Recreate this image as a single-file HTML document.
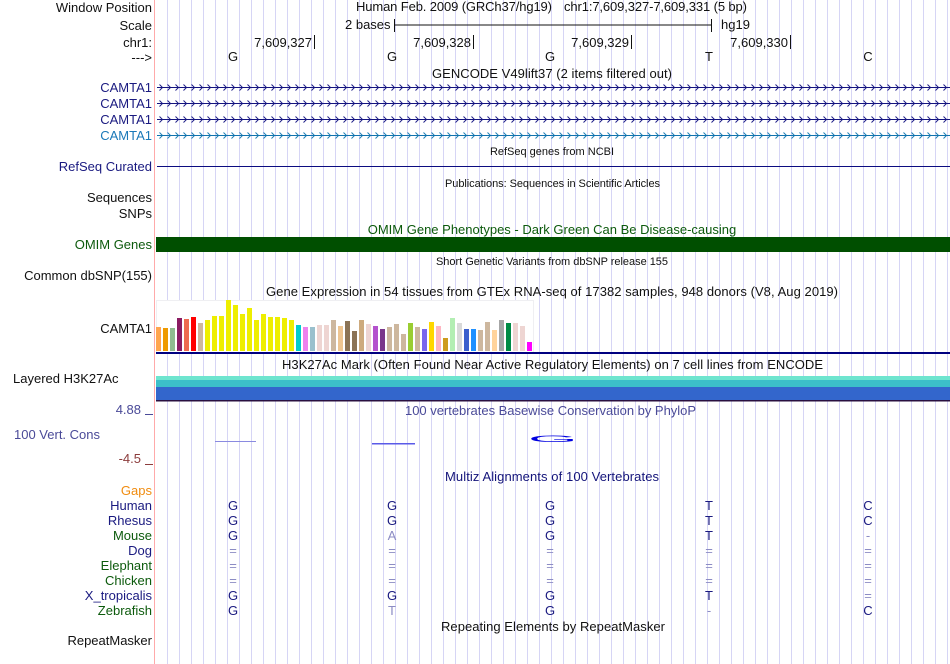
<!DOCTYPE html>
<html><head><meta charset="utf-8"><style>
html,body{margin:0;padding:0;background:#fff;width:950px;height:664px;overflow:hidden}
svg{display:block}
text{font-family:"Liberation Sans",sans-serif;font-size:13px;fill:#111}
.r{text-anchor:end}.c{text-anchor:middle}.s{font-size:11px}
.n{fill:#1a1a80}.g{fill:#0c5a0c}.l{fill:#8c8cc4}
</style></head><body>
<svg width="950" height="664" viewBox="0 0 950 664" xmlns="http://www.w3.org/2000/svg">
<defs>
<pattern id="grid" x="156" y="0" width="12" height="664" patternUnits="userSpaceOnUse"><rect x="11" y="0" width="1" height="664" fill="#d6d5f5"/></pattern>
<pattern id="ch" x="157" y="0" width="8" height="16" patternUnits="userSpaceOnUse"><path d="M2.5 4.5 L5.5 7.5 L2.5 10.5" fill="none" stroke="#1f1f88" stroke-width="1"/></pattern>
<pattern id="ch2" x="157" y="0" width="8" height="16" patternUnits="userSpaceOnUse"><path d="M2.5 4.5 L5.5 7.5 L2.5 10.5" fill="none" stroke="#1f7fb5" stroke-width="1"/></pattern>
</defs>
<rect width="950" height="664" fill="#fff"/>
<rect x="156" y="0" width="792" height="664" fill="url(#grid)"/>
<rect x="154" y="0" width="1" height="664" fill="#ffaaaa"/>

<text x="152" y="12" class="r">Window Position</text>
<text x="152" y="30" class="r">Scale</text>
<text x="152" y="47" class="r">chr1:</text>
<text x="152" y="62" class="r">---&gt;</text>
<text x="356" y="11" textLength="196" lengthAdjust="spacing">Human Feb. 2009 (GRCh37/hg19)</text>
<text x="564" y="11" textLength="183" lengthAdjust="spacing">chr1:7,609,327-7,609,331 (5 bp)</text>
<text x="345" y="29">2 bases</text>
<text x="721" y="29">hg19</text>
<path d="M394.5 19V32M711.5 19V32M394 25H712" stroke="#111" stroke-width="1" fill="none"/>
<text x="312" y="47" class="r">7,609,327</text>
<text x="471" y="47" class="r">7,609,328</text>
<text x="629" y="47" class="r">7,609,329</text>
<text x="788" y="47" class="r">7,609,330</text>
<path d="M314.5 35V49M473.5 35V49M631.5 35V49M790.5 35V49" stroke="#111" stroke-width="1"/>
<text x="233" y="61" class="c">G</text><text x="392" y="61" class="c">G</text><text x="550" y="61" class="c">G</text><text x="709" y="61" class="c">T</text><text x="868" y="61" class="c">C</text>
<text x="432" y="78" textLength="240" lengthAdjust="spacing">GENCODE V49lift37 (2 items filtered out)</text>

<text x="152" y="92" class="r n">CAMTA1</text>
<text x="152" y="108" class="r n">CAMTA1</text>
<text x="152" y="124" class="r n">CAMTA1</text>
<text x="152" y="140" class="r" style="fill:#1a78b8">CAMTA1</text>
<rect x="157" y="82" width="793" height="11" fill="url(#ch)"/>
<rect x="157" y="98" width="793" height="11" fill="url(#ch)"/>
<rect x="157" y="114" width="793" height="11" fill="url(#ch)"/>
<rect x="157" y="130" width="793" height="11" fill="url(#ch2)"/>
<rect x="157" y="87" width="793" height="1" fill="#13137f"/>
<rect x="157" y="103" width="793" height="1" fill="#13137f"/>
<rect x="157" y="119" width="793" height="1" fill="#13137f"/>
<rect x="157" y="135" width="793" height="1" fill="#1173ad"/>

<text x="552" y="155" class="c s">RefSeq genes from NCBI</text>
<text x="152" y="171" class="r n">RefSeq Curated</text>
<rect x="157" y="166" width="793" height="1" fill="#0c0c80"/>
<text x="445" y="187" class="s" textLength="215" lengthAdjust="spacing">Publications: Sequences in Scientific Articles</text>
<text x="152" y="202" class="r">Sequences</text>
<text x="152" y="218" class="r">SNPs</text>
<text x="552" y="234" class="c g">OMIM Gene Phenotypes - Dark Green Can Be Disease-causing</text>
<text x="152" y="249" class="r g">OMIM Genes</text>
<rect x="156" y="237" width="794" height="15" fill="#004f00"/>
<text x="436" y="265" class="s" textLength="232" lengthAdjust="spacing">Short Genetic Variants from dbSNP release 155</text>
<text x="152" y="280" class="r">Common dbSNP(155)</text>
<text x="266" y="296" textLength="572" lengthAdjust="spacing">Gene Expression in 54 tissues from GTEx RNA-seq of 17382 samples, 948 donors (V8, Aug 2019)</text>
<text x="152" y="333" class="r">CAMTA1</text>

<rect x="156.5" y="300.5" width="377" height="52" fill="#fff" stroke="#efeff2"/>
<g>
<rect x="156" y="327" width="5" height="24" fill="#FFA54F"/>
<rect x="163" y="328" width="5" height="23" fill="#EE9A00"/>
<rect x="170" y="328" width="5" height="23" fill="#8FBC8F"/>
<rect x="177" y="318" width="5" height="33" fill="#8B1C62"/>
<rect x="184" y="319" width="5" height="32" fill="#EE6A50"/>
<rect x="191" y="317" width="5" height="34" fill="#FF0000"/>
<rect x="198" y="323" width="5" height="28" fill="#CDB79E"/>
<rect x="205" y="320" width="5" height="31" fill="#EEEE00"/>
<rect x="212" y="316" width="5" height="35" fill="#EEEE00"/>
<rect x="219" y="316" width="5" height="35" fill="#EEEE00"/>
<rect x="226" y="300" width="5" height="51" fill="#EEEE00"/>
<rect x="233" y="305" width="5" height="46" fill="#EEEE00"/>
<rect x="240" y="314" width="5" height="37" fill="#EEEE00"/>
<rect x="247" y="308" width="5" height="43" fill="#EEEE00"/>
<rect x="254" y="320" width="5" height="31" fill="#EEEE00"/>
<rect x="261" y="314" width="5" height="37" fill="#EEEE00"/>
<rect x="268" y="317" width="5" height="34" fill="#EEEE00"/>
<rect x="275" y="317" width="5" height="34" fill="#EEEE00"/>
<rect x="282" y="318" width="5" height="33" fill="#EEEE00"/>
<rect x="289" y="320" width="5" height="31" fill="#EEEE00"/>
<rect x="296" y="325" width="5" height="26" fill="#00CDCD"/>
<rect x="303" y="327" width="5" height="24" fill="#EE82EE"/>
<rect x="310" y="327" width="5" height="24" fill="#9AC0CD"/>
<rect x="317" y="325" width="5" height="26" fill="#EED5D2"/>
<rect x="324" y="325" width="5" height="26" fill="#EED5D2"/>
<rect x="331" y="320" width="5" height="31" fill="#CDB79E"/>
<rect x="338" y="326" width="5" height="25" fill="#EEC591"/>
<rect x="345" y="321" width="5" height="30" fill="#8B7355"/>
<rect x="352" y="331" width="5" height="20" fill="#8B7355"/>
<rect x="359" y="320" width="5" height="31" fill="#CDAA7D"/>
<rect x="366" y="324" width="5" height="27" fill="#EED5D2"/>
<rect x="373" y="326" width="5" height="25" fill="#B452CD"/>
<rect x="380" y="329" width="5" height="22" fill="#7A378B"/>
<rect x="387" y="327" width="5" height="24" fill="#CDB79E"/>
<rect x="394" y="324" width="5" height="27" fill="#CDB79E"/>
<rect x="401" y="334" width="5" height="17" fill="#CDB79E"/>
<rect x="408" y="323" width="5" height="28" fill="#9ACD32"/>
<rect x="415" y="327" width="5" height="24" fill="#CDB79E"/>
<rect x="422" y="329" width="5" height="22" fill="#7A67EE"/>
<rect x="429" y="322" width="5" height="29" fill="#FFD700"/>
<rect x="436" y="326" width="5" height="25" fill="#FFB6C1"/>
<rect x="443" y="338" width="5" height="13" fill="#CD9B1D"/>
<rect x="450" y="318" width="5" height="33" fill="#B3EEB3"/>
<rect x="457" y="323" width="5" height="28" fill="#D9D9D9"/>
<rect x="464" y="329" width="5" height="22" fill="#3A5FCD"/>
<rect x="471" y="329" width="5" height="22" fill="#1E90FF"/>
<rect x="478" y="330" width="5" height="21" fill="#CDB79E"/>
<rect x="485" y="322" width="5" height="29" fill="#CDB79E"/>
<rect x="492" y="330" width="5" height="21" fill="#FFD39B"/>
<rect x="499" y="320" width="5" height="31" fill="#A6A6A6"/>
<rect x="506" y="323" width="5" height="28" fill="#008B45"/>
<rect x="513" y="323" width="5" height="28" fill="#EED5D2"/>
<rect x="520" y="326" width="5" height="25" fill="#EED5D2"/>
<rect x="527" y="342" width="5" height="9" fill="#FF00FF"/>
</g>
<rect x="156" y="352" width="794" height="2" fill="#000080"/>

<text x="282" y="369" textLength="541" lengthAdjust="spacing">H3K27Ac Mark (Often Found Near Active Regulatory Elements) on 7 cell lines from ENCODE</text>
<text x="13" y="383">Layered H3K27Ac</text>
<rect x="156" y="376" width="794" height="4" fill="#6ee5cf"/>
<rect x="156" y="380" width="794" height="7" fill="#3cbfc9"/>
<rect x="156" y="387" width="794" height="13" fill="#3366cc"/>
<rect x="156" y="400" width="794" height="1.5" fill="#2a1040"/>

<text x="141" y="414" class="r" style="fill:#4a4a98">4.88</text>
<rect x="145" y="414" width="8" height="1" fill="#4a4a98"/>
<text x="14" y="439" style="fill:#4a4a98">100 Vert. Cons</text>
<text x="141" y="463" class="r" style="fill:#8c3c3c">-4.5</text>
<rect x="145" y="464" width="8" height="1" fill="#8c3c3c"/>
<text x="405" y="415" textLength="291" lengthAdjust="spacing" style="fill:#4a4a98">100 vertebrates Basewise Conservation by PhyloP</text>
<rect x="215" y="441" width="41" height="1" fill="#8a8ae0"/>
<rect x="372" y="443" width="43" height="1.5" fill="#5a5ae8"/>
<text x="528" y="442" transform="translate(528 442) scale(4.9 .74) translate(-528 -442)" style="fill:#0000e0">G</text>

<text x="445" y="481" textLength="214" lengthAdjust="spacing" style="fill:#14147a">Multiz Alignments of 100 Vertebrates</text>
<text x="152" y="495" class="r" style="fill:#f08c10">Gaps</text>
<text x="152" y="510" class="r n">Human</text>
<text x="152" y="525" class="r n">Rhesus</text>
<text x="152" y="540" class="r g">Mouse</text>
<text x="152" y="555" class="r n">Dog</text>
<text x="152" y="570" class="r g">Elephant</text>
<text x="152" y="585" class="r g">Chicken</text>
<text x="152" y="600" class="r n">X_tropicalis</text>
<text x="152" y="615" class="r g">Zebrafish</text>

<g text-anchor="middle">
<text x="233" y="510" class="n">G</text><text x="392" y="510" class="n">G</text><text x="550" y="510" class="n">G</text><text x="709" y="510" class="n">T</text><text x="868" y="510" class="n">C</text>
<text x="233" y="525" class="n">G</text><text x="392" y="525" class="n">G</text><text x="550" y="525" class="n">G</text><text x="709" y="525" class="n">T</text><text x="868" y="525" class="n">C</text>
<text x="233" y="540" class="n">G</text><text x="392" y="540" class="l">A</text><text x="550" y="540" class="n">G</text><text x="709" y="540" class="n">T</text><text x="868" y="540" class="l">-</text>
<text x="233" y="555" class="l">=</text><text x="392" y="555" class="l">=</text><text x="550" y="555" class="l">=</text><text x="709" y="555" class="l">=</text><text x="868" y="555" class="l">=</text>
<text x="233" y="570" class="l">=</text><text x="392" y="570" class="l">=</text><text x="550" y="570" class="l">=</text><text x="709" y="570" class="l">=</text><text x="868" y="570" class="l">=</text>
<text x="233" y="585" class="l">=</text><text x="392" y="585" class="l">=</text><text x="550" y="585" class="l">=</text><text x="709" y="585" class="l">=</text><text x="868" y="585" class="l">=</text>
<text x="233" y="600" class="n">G</text><text x="392" y="600" class="n">G</text><text x="550" y="600" class="n">G</text><text x="709" y="600" class="n">T</text><text x="868" y="600" class="l">=</text>
<text x="233" y="615" class="n">G</text><text x="392" y="615" class="l">T</text><text x="550" y="615" class="n">G</text><text x="709" y="615" class="l">-</text><text x="868" y="615" class="n">C</text>
</g>

<text x="441" y="631" textLength="224" lengthAdjust="spacing">Repeating Elements by RepeatMasker</text>
<text x="152" y="645" class="r">RepeatMasker</text>
</svg>
</body></html>
